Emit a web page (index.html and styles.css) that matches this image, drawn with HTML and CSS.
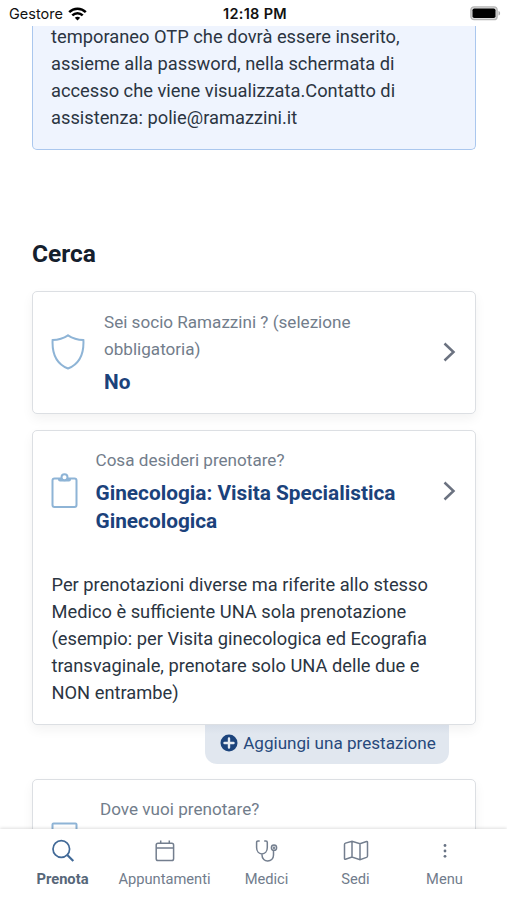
FILE: index.html
```html
<!DOCTYPE html>
<html lang="it">
<head>
<meta charset="utf-8">
<title>Prenota</title>
<link rel="stylesheet" href="styles.css">
</head>
<body>
<header class="status">
  <div class="carrier"><span>Gestore</span>
    <svg width="19" height="14" viewBox="0 0 19 14" fill="none" stroke="#000" stroke-width="2.5"><path d="M1.2 5.1C5.8.5 13.2.5 17.8 5.1M4.3 8.3c2.9-2.9 7.5-2.9 10.4 0"/><path d="M9.5 13.6 6.8 10.8c1.5-1.5 3.9-1.5 5.4 0z" fill="#000" stroke="none"/></svg>
  </div>
  <div class="time">12:18 PM</div>
  <svg class="battery" width="31" height="15" viewBox="0 0 31 15"><rect x=".9" y=".9" width="26.2" height="12.7" rx="3.2" fill="#ddd" stroke="#b5b5b5" stroke-width="1.4"/><rect x="2.5" y="2.5" width="23" height="9.5" rx="1.8"/><path d="M28.5 5v4.6c2.2-.7 2.2-3.9 0-4.6z" fill="#aaa"/></svg>
</header>
<main class="content">
  <section class="notice"><p>temporaneo OTP che dovrà essere inserito,<br>assieme alla password, nella schermata di<br>accesso che viene visualizzata.Contatto di<br>assistenza: polie@ramazzini.it</p></section>
  <h1>Cerca</h1>
  <section class="card member">
    <div class="row">
      <svg class="shield" width="34" height="36" viewBox="0 0 34 36"><path d="M17 1.3C12.500 4.300 7 5.900 1.600 6.100 1 18.500 4.500 29.500 17 34.500 29.500 29.500 33 18.500 32.400 6.100 27 5.900 21.500 4.300 17 1.300Z"/></svg>
      <div class="text"><div class="label">Sei socio Ramazzini ? (selezione<br>obbligatoria)</div><div class="value">No</div></div>
      <svg class="chevron" width="13" height="20" viewBox="0 0 13 20"><path d="m1.500 1.500 9 8.500-9 8.500"/></svg>
    </div>
  </section>
  <section class="card service">
    <div class="row">
      <svg class="clip" width="28" height="36" viewBox="0 0 28 36"><rect x="1.500" y="5.400" width="24" height="28.600" rx="2"/><path class="clasp" d="M7 5.400H20V6.500Q20 8.500 18 8.500H9Q7 8.500 7 6.500Z"/><circle class="hole" cx="13.500" cy="4.200" r="3"/></svg>
      <div class="text"><div class="label">Cosa desideri prenotare?</div><div class="value">Ginecologia: Visita Specialistica<br>Ginecologica</div></div>
      <svg class="chevron" width="13" height="20" viewBox="0 0 13 20"><path d="m1.500 1.500 9 8.500-9 8.500"/></svg>
    </div>
    <p class="note">Per prenotazioni diverse ma riferite allo stesso<br>Medico è sufficiente UNA sola prenotazione<br>(esempio: per Visita ginecologica ed Ecografia<br>transvaginale, prenotare solo UNA delle due e<br>NON entrambe)</p>
  </section>
  <div class="add"><svg width="18" height="18" viewBox="0 0 18 18"><circle cx="9" cy="9" r="8.500" fill="#1c447c"/><path d="M9 4.500v9M4.500 9h9" stroke="#e5ebf2" stroke-width="2.400" stroke-linecap="round"/></svg><span>Aggiungi una prestazione</span></div>
  <section class="card place">
    <div class="row">
      <svg width="28" height="36" viewBox="0 0 28 36"><rect x="1.500" y="1.500" width="24" height="33" rx="1"/></svg>
      <div class="text"><div class="label">Dove vuoi prenotare?</div></div>
    </div>
  </section>
</main>
<nav class="tabs">
  <a class="tab active"><svg width="24" height="24" viewBox="0 0 24 24"><circle cx="10.300" cy="10" r="8.300"/><path d="m16.300 16 6 6" stroke-width="2.200"/></svg><span>Prenota</span></a>
  <a class="tab"><svg width="24" height="24" viewBox="0 0 24 24"><rect x="3.200" y="4.300" width="17.400" height="17.200" rx="1.800"/><path d="M3.200 9h17.400M7.700 1.500v3M16.300 1.500v3"/></svg><span>Appuntamenti</span></a>
  <a class="tab"><svg width="24" height="24" viewBox="0 0 24 24"><path d="M4.700 2H3Q1.600 2 1.600 3.500V8.500C1.600 17 12.300 17 12.300 8.500V3.500Q12.300 2 10.900 2H9.200M7 14.800V16C7 24.200 18.500 23.700 18.500 16V11.500"/><circle cx="19" cy="8.700" r="2.600"/><circle cx="19" cy="8.700" r=".5"/></svg><span>Medici</span></a>
  <a class="tab"><svg width="26" height="24" viewBox="0 0 26 24"><path d="M1.500 5.500Q1.500 4.500 2.500 4.100L9 2.200 17 4.800 23.500 2.500Q24.500 2.300 24.500 3.300V17Q24.500 18 23.500 18.400L17 20.600 9 18 2.500 20.200Q1.500 20.400 1.500 19.400ZM9 2.200V18M17 4.800V20.600"/></svg><span>Sedi</span></a>
  <a class="tab"><svg width="24" height="24" viewBox="0 0 24 24"><g fill="#687384" stroke="none"><circle cx="12" cy="6.500" r="1.400"/><circle cx="12" cy="12" r="1.400"/><circle cx="12" cy="17.300" r="1.400"/></g></svg><span>Menu</span></a>
</nav>
</body>
</html>
```
FILE: styles.css
```css
* { box-sizing: border-box; }
body { margin: 0; width: 507px; height: 900px; overflow: hidden; display: flex; flex-direction: column; font-family: Roboto, sans-serif; background: #fff; color: #2b3542; }
h1, p { margin: 0; }
svg { flex: none; fill: none; }
.status { height: 26px; flex: none; display: grid; grid-template-columns: 1fr auto 1fr; align-items: center; padding: 1px 6px 0 9px; font: 14.500px/18px Inter, sans-serif; color: #111; }
.carrier { display: flex; gap: 5px; align-items: center; }
.time { font-weight: 600; letter-spacing: .3px; }
.battery { justify-self: end; fill: #000; }
.content { height: 803px; flex: none; overflow: hidden; padding: 0 31px 0 32px; display: flex; flex-direction: column; }
.notice { height: 124px; flex: none; display: flex; align-items: flex-end; overflow: hidden; padding: 0 18px 18px; border: 1.500px solid #aac7ee; border-top: 0; border-radius: 0 0 5px 5px; background: #eff4fe; font-size: 18.300px; line-height: 27px; white-space: nowrap; }
h1 { margin: 86px 0 20px; font-size: 24.500px; line-height: 35px; font-weight: 700; color: #15202d; }
.card { flex: none; border: 1px solid #dcdfe3; border-radius: 5px; background: #fff; box-shadow: 0 5px 12px rgba(0,0,0,.05); }
.row { display: flex; align-items: center; padding: 0 19px 0 18px; }
.row svg { stroke: #8eb4d6; stroke-width: 2; }
.text { flex: 1; white-space: nowrap; }
.label { font-size: 17.100px; line-height: 27px; color: #727d8b; }
.value { font-size: 20.800px; line-height: 28px; font-weight: 700; color: #1b427b; margin-top: 5px; }
.row .chevron { stroke: #6b7280; stroke-width: 2.500; }
.member { height: 123px; margin-bottom: 15px; }
.member .row { gap: 19px; padding-top: 17px; }
.member svg { margin-bottom: 2px; }
.member { margin-bottom: 16px; }
.service { height: 295px; }
.service .row { gap: 16.500px; padding-top: 16px; }
.clip .clasp { fill: #8eb4d6; stroke: none; }
.clip .hole { fill: #fff; }
.note { margin: 36px 0 0 18.500px; font-size: 18.300px; line-height: 27px; white-space: nowrap; }
.add { align-self: flex-end; flex: none; display: flex; align-items: center; justify-content: center; gap: 5px; width: 244px; height: 39px; padding: 0 0 3px 2px; margin: 0 27px 15px 0; border-radius: 0 0 12px 12px; background: linear-gradient(#d7dee8, #e1e7ef 9px); color: #27497c; font-size: 17.100px; }
.place { height: 122px; }
.place .row { align-items: flex-start; gap: 21px; padding-top: 16px; }
.place svg { margin-top: 26px; }
.tabs { position: relative; flex: none; height: 71px; display: grid; grid-template-columns: 89px 115px 89px 89px 89px; padding: 10px 0 0 18px; background: #fff; box-shadow: 0 -1px 3px rgba(0,0,0,.13); }
.tab { display: flex; flex-direction: column; align-items: center; gap: 6px; font-size: 14.700px; line-height: 20px; color: #717c8c; }
.tab svg { stroke: #737e8e; stroke-width: 1.500; }
.tab.active { font-weight: 700; color: #576779; }
.tab.active svg { stroke: #416997; stroke-width: 1.700; }
```
